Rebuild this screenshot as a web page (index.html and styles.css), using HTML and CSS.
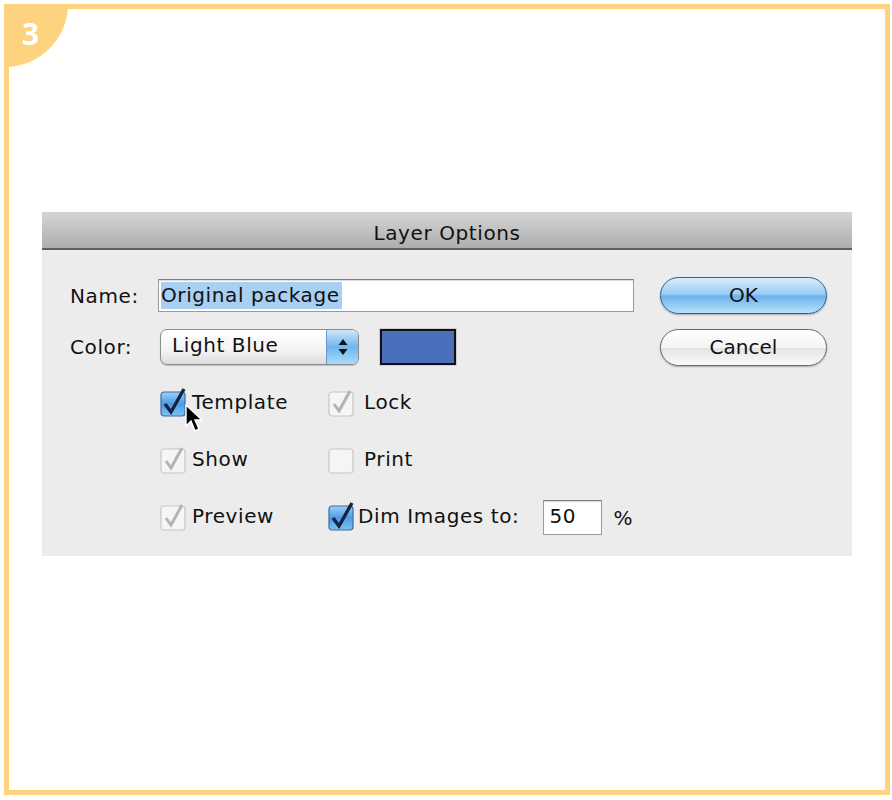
FILE: index.html
```html
<!DOCTYPE html>
<html lang="en">
<head>
    <meta charset="UTF-8">
    <meta name="viewport" content="width=device-width, initial-scale=1.0">
    <title>Layer Options</title>
    <link rel="stylesheet" href="styles.css">
</head>
<body>
    <div class="frame">
        <div class="step-badge">3</div>

        <div class="dialog">
            <div class="title-bar">Layer Options</div>

            <div class="dialog-body">
                <div class="fields">
                    <!-- Name row -->
                    <div class="field-row">
                        <span class="field-label">Name:</span>
                        <div class="text-field"><span class="selected">Original package</span></div>
                    </div>

                    <!-- Color row -->
                    <div class="field-row">
                        <span class="field-label">Color:</span>
                        <div class="popup">
                            <span class="popup-text">Light Blue</span>
                            <span class="popup-arrows">
                                <svg width="12" height="18" viewBox="0 0 12 18"><path d="M6 1 L10.5 7 L1.5 7 Z M1.5 11 L10.5 11 L6 17 Z" fill="#111"/></svg>
                            </span>
                        </div>
                        <div class="swatch"></div>
                    </div>

                    <!-- Checkboxes -->
                    <div class="checks">
                        <label class="check">
                            <svg class="box" width="28" height="30" viewBox="0 0 28 30">
                                <defs>
                                    <linearGradient id="blue" x1="0" y1="0" x2="0" y2="1">
                                        <stop offset="0" stop-color="#9fd0f6"/>
                                        <stop offset="0.5" stop-color="#4b9be6"/>
                                        <stop offset="1" stop-color="#7cc2f4"/>
                                    </linearGradient>
                                </defs>
                                <rect x="1" y="5" width="24" height="24" rx="3" fill="url(#blue)" stroke="#3c6aa3" stroke-width="1.2"/>
                                <path d="M5 17 L11 25 L24 2" fill="none" stroke="#16243f" stroke-width="3.4"/>
                            </svg>
                            <span>Template</span>
                            <svg class="cursor" width="20" height="30" viewBox="0 0 20 30">
                                <path d="M1 1 L1 22 L6 17 L10 27 L14 25 L10 16 L17 16 Z" fill="#000" stroke="#fff" stroke-width="1.4"/>
                            </svg>
                        </label>
                        <label class="check lock">
                            <svg class="box" width="28" height="30" viewBox="0 0 28 30">
                                <rect x="1" y="5" width="24" height="24" rx="3" fill="#f5f5f5" stroke="#c6c6c6" stroke-width="1.2"/>
                                <path d="M6 17 L11 24 L22 4" fill="none" stroke="#b3b3b3" stroke-width="3"/>
                            </svg>
                            <span>Lock</span>
                        </label>
                        <label class="check">
                            <svg class="box" width="28" height="30" viewBox="0 0 28 30">
                                <rect x="1" y="5" width="24" height="24" rx="3" fill="#f5f5f5" stroke="#c6c6c6" stroke-width="1.2"/>
                                <path d="M6 17 L11 24 L22 4" fill="none" stroke="#b3b3b3" stroke-width="3"/>
                            </svg>
                            <span>Show</span>
                        </label>
                        <label class="check lock">
                            <svg class="box" width="28" height="30" viewBox="0 0 28 30">
                                <rect x="1" y="5" width="24" height="24" rx="3" fill="#f5f5f5" stroke="#c6c6c6" stroke-width="1.2"/>
                            </svg>
                            <span>Print</span>
                        </label>
                        <label class="check">
                            <svg class="box" width="28" height="30" viewBox="0 0 28 30">
                                <rect x="1" y="5" width="24" height="24" rx="3" fill="#f5f5f5" stroke="#c6c6c6" stroke-width="1.2"/>
                                <path d="M6 17 L11 24 L22 4" fill="none" stroke="#b3b3b3" stroke-width="3"/>
                            </svg>
                            <span>Preview</span>
                        </label>
                        <label class="check dim">
                            <svg class="box" width="28" height="30" viewBox="0 0 28 30">
                                <rect x="1" y="5" width="24" height="24" rx="3" fill="url(#blue)" stroke="#3c6aa3" stroke-width="1.2"/>
                                <path d="M5 17 L11 25 L24 2" fill="none" stroke="#16243f" stroke-width="3.4"/>
                            </svg>
                            <span>Dim Images to:</span>
                            <span class="num-field">50</span>
                            <span class="percent">%</span>
                        </label>
                    </div>
                </div>

                <!-- Buttons -->
                <div class="buttons">
                    <button class="btn btn-default">OK</button>
                    <button class="btn">Cancel</button>
                </div>
            </div>
        </div>
    </div>
</body>
</html>
```

FILE: styles.css
```css
body {
    margin: 0;
    background-color: #ffffff;
    font-family: "DejaVu Sans", Verdana, sans-serif;
    color: #111111;
}
.frame {
    position: relative;
    box-sizing: border-box;
    width: 886px;
    height: 791px;
    margin: 4px 2px 0 4px;
    padding: 203px 0 0 33px;
    border: 5px solid #fdd37f;
    background-color: #fffffd;
}
.step-badge {
    position: absolute;
    top: -5px;
    left: -5px;
    width: 64px;
    height: 63px;
    padding: 12px 0 0 18px;
    box-sizing: border-box;
    background-color: #fdd37f;
    border-bottom-right-radius: 64px;
    font-family: "Open Sans", sans-serif;
    font-weight: 700;
    font-size: 30px;
    line-height: 36px;
    color: #ffffff;
}
/* Dialog window */
.dialog {
    width: 810px;
    height: 344px;
    background-color: #ececec;
}
.title-bar {
    box-sizing: border-box;
    height: 38px;
    padding-top: 9px;
    text-align: center;
    font-size: 20px;
    letter-spacing: 0.6px;
    background: linear-gradient(#d5d5d5, #aeaeae);
    border-bottom: 2px solid #606060;
}
.dialog-body {
    display: flex;
    padding: 27px 26px 0 28px;
    font-size: 20px;
    letter-spacing: 0.6px;
}
.fields {
    width: 564px;
}
.field-row {
    display: flex;
    align-items: center;
    height: 37px;
    margin-bottom: 14px;
}
.field-label {
    width: 88px;
}
.text-field {
    box-sizing: border-box;
    width: 476px;
    height: 33px;
    padding: 2px 0 0 2px;
    background-color: #ffffff;
    border: 1px solid #9a9a9a;
    border-top-color: #7c7c7c;
    box-shadow: inset 0 1px 1px rgba(0, 0, 0, 0.15);
}
.selected {
    display: inline-block;
    height: 27px;
    line-height: 27px;
    padding-right: 2px;
    background-color: #a9cff2;
}
/* Color popup menu */
.popup {
    display: flex;
    box-sizing: border-box;
    width: 199px;
    height: 36px;
    margin-left: 2px;
    border: 1px solid #8d8d8d;
    border-radius: 7px;
    overflow: hidden;
    background: linear-gradient(#ffffff, #f3f3f3 60%, #dcdcdc);
    box-shadow: 0 1px 1px rgba(0, 0, 0, 0.2);
}
.popup-text {
    flex: 1;
    padding: 3px 0 0 11px;
}
.popup-arrows {
    display: flex;
    align-items: center;
    justify-content: center;
    width: 31px;
    background: linear-gradient(#cde6fb, #6fb6ef 50%, #a9daf9);
    border-left: 1px solid #6e97c9;
}
.swatch {
    box-sizing: border-box;
    width: 76px;
    height: 36px;
    margin-left: 21px;
    background-color: #4a70bd;
    border: 2px solid #101010;
    box-shadow: 0 0 0 1px #cfcfcf;
}
/* Checkboxes */
.checks {
    display: grid;
    grid-template-columns: 168px auto;
    row-gap: 25px;
    margin: 21px 0 0 90px;
}
.check {
    position: relative;
    display: flex;
    align-items: center;
    height: 32px;
}
.check .box {
    margin-right: 4px;
    overflow: visible;
}
.check.lock .box {
    margin-right: 8px;
}
.check.dim .box {
    margin-right: 2px;
}
.cursor {
    position: absolute;
    left: 25px;
    top: 18px;
}
.num-field {
    box-sizing: border-box;
    width: 59px;
    height: 35px;
    margin: 3px 0 0 24px;
    padding: 3px 0 0 5px;
    background-color: #ffffff;
    border: 1px solid #9a9a9a;
    border-top-color: #7c7c7c;
    box-shadow: inset 0 1px 1px rgba(0, 0, 0, 0.15);
}
.percent {
    margin: 3px 0 0 11px;
}
/* Buttons */
.buttons {
    display: flex;
    flex-direction: column;
    gap: 15px;
    margin-left: 26px;
}
.btn {
    box-sizing: border-box;
    width: 167px;
    height: 37px;
    padding: 0 0 2px;
    font-family: "DejaVu Sans", Verdana, sans-serif;
    font-size: 20px;
    color: #111111;
    border: 1px solid #6b6b6b;
    border-radius: 19px;
    background: linear-gradient(#ffffff, #f4f4f4 50%, #e3e3e3 51%, #fafafa);
    box-shadow: 0 1px 2px rgba(0, 0, 0, 0.3);
}
.btn-default {
    border-color: #2f5f96;
    background: linear-gradient(#d8ecfb, #9bcdf3 45%, #6cb3ec 52%, #b7e2fb);
}
```
